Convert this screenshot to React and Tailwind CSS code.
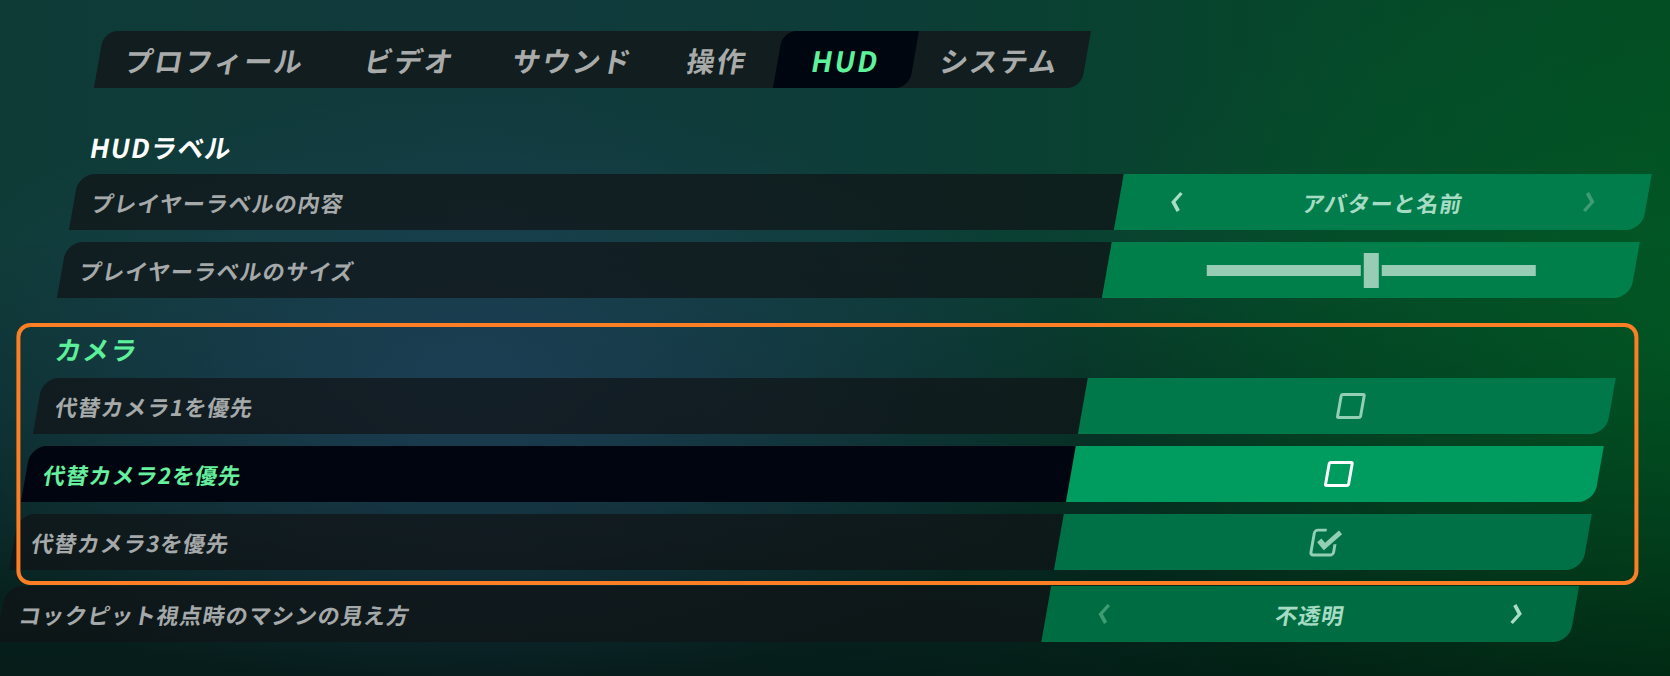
import React from "react";

const tabs = [
  { label: "プロフィール", w: "w-[232px]" },
  { label: "ビデオ", w: "w-[158px]" },
  { label: "サウンド", w: "w-[168px]" },
  { label: "操作", w: "w-[121px]" },
  { label: "HUD", w: "w-[136px]", active: true },
  { label: "システム", w: "w-[172px]" },
];

const Chevron = ({ dir, dim }) => (
  <svg
    width="14"
    height="24"
    viewBox="0 0 14 24"
    className={dim ? "text-[#3e9d70]" : "text-[#a9ddc5]"}
  >
    <polyline
      points={dir === "left" ? "10,3 3.5,12 10,21" : "4,3 10.5,12 4,21"}
      fill="none"
      stroke="currentColor"
      strokeWidth="3.5"
    />
  </svg>
);

const Row = ({ label, selected, green, className = "", children }) => (
  <div className={`flex h-[56px] ${className}`}>
    <div
      className={`flex w-[1045px] items-center rounded-tl-[16px] pl-[18px] ${
        selected ? "bg-[#01050f]" : "bg-[rgba(16,20,22,0.72)]"
      }`}
    >
      <span
        className={`text-[22px] font-semibold tracking-[1px] ${
          selected ? "text-[#66f09e]" : "text-[#a5a9a9]"
        }`}
      >
        {label}
      </span>
    </div>
    <div className={`flex flex-1 items-center rounded-br-[16px] ${green}`}>
      {children}
    </div>
  </div>
);

const Selector = ({ value, leftDim, rightDim }) => (
  <div className="flex w-full items-center justify-between px-[51px]">
    <Chevron dir="left" dim={leftDim} />
    <span className="text-[22px] font-semibold tracking-[1px] text-[#a6dcc3]">
      {value}
    </span>
    <Chevron dir="right" dim={rightDim} />
  </div>
);

const Slider = () => (
  // the slider itself is drawn upright, so undo the panel skew
  <div className="flex w-full justify-center skew-x-[10deg]">
    <div className="flex items-center gap-[3px]">
      <div className="h-[11px] w-[154px] bg-[#98cdb5]" />
      <div className="h-[35px] w-[15px] bg-[#98cdb5]" />
      <div className="h-[11px] w-[154px] bg-[#98cdb5]" />
    </div>
  </div>
);

const Checkbox = ({ checked, bright }) => (
  <div className="flex w-full justify-center pl-[8px]">
    {checked ? (
      <svg width="34" height="32" viewBox="0 0 30 28" className="text-[#93d0b3]">
        <path
          d="M13 3.5 H5 a2.5 2.5 0 0 0 -2.5 2.5 V23 a2.5 2.5 0 0 0 2.5 2.5 H20 a2.5 2.5 0 0 0 2.5 -2.5 V16"
          fill="none"
          stroke="currentColor"
          strokeWidth="2.6"
        />
        <path
          d="M8 12.5 L13.5 18 L25.5 5.5"
          fill="none"
          stroke="currentColor"
          strokeWidth="4.6"
        />
      </svg>
    ) : (
      <div
        className={`h-[26px] w-[26px] rounded-[3px] border-[3px] ${
          bright ? "border-white" : "border-[#93d0b3]"
        }`}
      />
    )}
  </div>
);

export default function App() {
  return (
    <div className="h-[676px] w-[1670px] overflow-hidden bg-[radial-gradient(ellipse_620px_300px_at_28%_58%,rgba(38,72,108,0.6),transparent),radial-gradient(ellipse_600px_420px_at_100%_50%,rgba(0,100,40,0.5),transparent),linear-gradient(180deg,rgba(0,0,0,0)_35%,rgba(0,8,6,0.6)_100%),linear-gradient(90deg,#0e3b36_0%,#113a3d_30%,#0c3d36_55%,#05482a_80%,#034c22_100%)] font-['Noto_Sans_CJK_JP','Noto_Sans',sans-serif]">
      <div className="ml-[104px] mt-[31px] flex w-[1573px] origin-top-left skew-x-[-10deg] flex-col">
        <nav className="flex h-[57px] w-fit rounded-tl-[14px] rounded-br-[14px] bg-[#111d1e]">
          {tabs.map((t) => (
            <div
              key={t.label}
              className={`flex ${t.w} items-center justify-center text-[28px] font-bold tracking-[2px] ${
                t.active
                  ? "rounded-tl-[14px] rounded-br-[14px] bg-[#00060f] text-[#5ef29a]"
                  : "text-[#a9abaa]"
              }`}
            >
              {t.label}
            </div>
          ))}
        </nav>

        <h2 className="mt-[40px] flex h-[36px] items-center pl-[7px] text-[26px] font-bold tracking-[1px] text-white">
          HUDラベル
        </h2>

        <Row label="プレイヤーラベルの内容" green="bg-[#007d4a]" className="mt-[10px]">
          <Selector value="アバターと名前" rightDim />
        </Row>
        <Row label="プレイヤーラベルのサイズ" green="bg-[#007f4a]" className="mt-[12px]">
          <Slider />
        </Row>

        <section className="relative mt-[25px] flex flex-col pb-[15px] pt-[7px]">
          <div className="pointer-events-none absolute inset-y-0 left-[-13px] right-[-36px] z-10 skew-x-[10deg] rounded-[14px] border-[4px] border-[#fc7f26]" />
          <h2 className="flex h-[36px] items-center pl-[8px] text-[26px] font-bold tracking-[1.5px] text-[#5df09a]">
            カメラ
          </h2>
          <Row label="代替カメラ1を優先" green="bg-[#00784a]" className="mt-[12px]">
            <Checkbox />
          </Row>
          <Row label="代替カメラ2を優先" selected green="bg-[#009c5f]" className="mt-[12px]">
            <Checkbox bright />
          </Row>
          <Row label="代替カメラ3を優先" green="bg-[#007047]" className="mt-[12px]">
            <Checkbox checked />
          </Row>
        </section>

        <Row label="コックピット視点時のマシンの見え方" green="bg-[#006c42]" className="mt-[1px]">
          <Selector value="不透明" leftDim />
        </Row>
      </div>
    </div>
  );
}
